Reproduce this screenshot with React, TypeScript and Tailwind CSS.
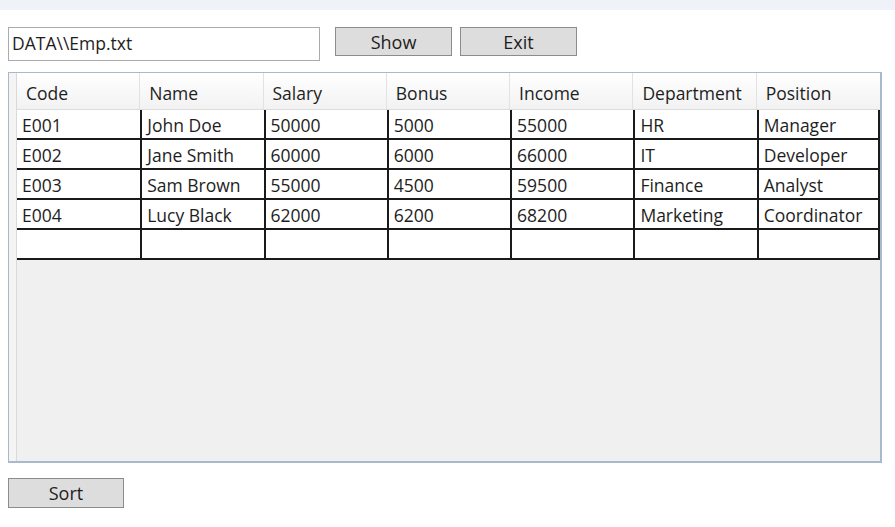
import React from 'react';

const COLUMNS = ['Code', 'Name', 'Salary', 'Bonus', 'Income', 'Department', 'Position'];

const ROWS = [
  ['E001', 'John Doe', '50000', '5000', '55000', 'HR', 'Manager'],
  ['E002', 'Jane Smith', '60000', '6000', '66000', 'IT', 'Developer'],
  ['E003', 'Sam Brown', '55000', '4500', '59500', 'Finance', 'Analyst'],
  ['E004', 'Lucy Black', '62000', '6200', '68200', 'Marketing', 'Coordinator'],
  ['', '', '', '', '', '', ''],
];

const WinButton: React.FC<{ label: string; className?: string }> = ({ label, className = '' }) => (
  <button
    className={`bg-[#dddddd] border border-[#8c8c8c] text-[#1e1e1e] text-[18px] leading-none flex items-center justify-center ${className}`}
  >
    {label}
  </button>
);

export default function App() {
  return (
    <div
      className="w-[895px] h-[527px] bg-white overflow-hidden text-[#1e1e1e]"
      style={{ fontFamily: '"Open Sans", "Noto Sans", sans-serif' }}
    >
      {/* title strip */}
      <div className="h-[10px] bg-[#eff2f8]" />

      {/* toolbar */}
      <div className="flex items-start pl-[8px] pt-[17px]">
        <div className="w-[312px] h-[34px] border border-[#ababab] flex items-center px-[3px] text-[17.5px] leading-none">
          DATA\\Emp.txt
        </div>
        <WinButton label="Show" className="ml-[15px] w-[117px] h-[29px]" />
        <WinButton label="Exit" className="ml-[8px] w-[117px] h-[29px]" />
      </div>

      {/* data grid */}
      <div className="ml-[8px] mt-[11px] w-[874px] h-[391px] border border-[#a9b8cb] border-b-2 border-r-2 bg-[#f0f0f0] flex">
        <div className="w-[8px] bg-[#f4f4f4] border-r border-[#d9d9d9]" />
        <div className="flex-1">
          <div className="flex h-[37px] bg-gradient-to-b from-white to-[#f2f2f2] border-b border-[#dcdcdc]">
            {COLUMNS.map((c, i) => (
              <div
                key={c}
                className={`w-[123.3px] flex items-center pl-[9px] pt-[5px] text-[17.5px] leading-none ${
                  i < COLUMNS.length - 1 ? 'border-r border-[#e2e2e2]' : ''
                }`}
              >
                {c}
              </div>
            ))}
          </div>
          {ROWS.map((row, r) => (
            <div key={r} className="flex h-[30px] bg-white">
              {row.map((v, i) => (
                <div
                  key={i}
                  className={`w-[123.3px] flex items-center pl-[5px] pt-[4px] text-[17.5px] leading-none border-b-2 border-[#1a1a1a] ${
                    i > 0 ? 'border-l-2' : ''
                  } ${i === row.length - 1 ? 'border-r-2' : ''}`}
                >
                  {v}
                </div>
              ))}
            </div>
          ))}
        </div>
      </div>

      {/* footer */}
      <div className="pl-[8px] pt-[15px]">
        <WinButton label="Sort" className="w-[116px] h-[30px]" />
      </div>
    </div>
  );
}
